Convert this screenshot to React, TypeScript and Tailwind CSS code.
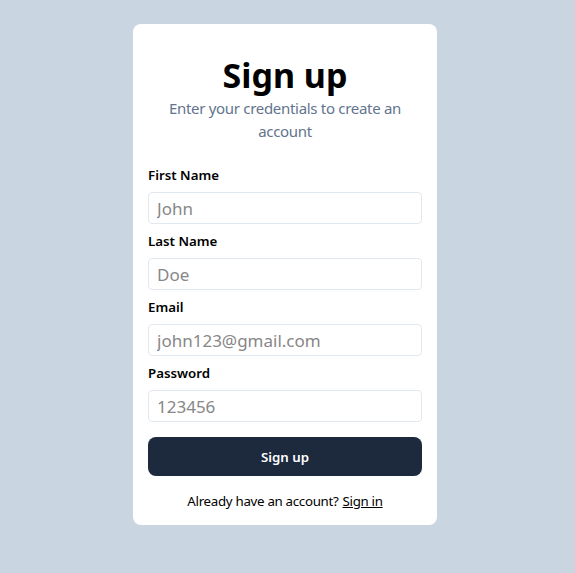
import React from 'react';

const font = { fontFamily: '"Noto Sans", "Open Sans", sans-serif' };

function Heading({ label }: { label: string }) {
  return <div className="pt-[25px] text-[34px] font-bold leading-[36px] text-black">{label}</div>;
}

function SubHeading({ label }: { label: string }) {
  return (
    <div className="px-[15px] pt-[4px] pb-[15px] text-[15px] leading-[23px] tracking-[-0.3px] text-slate-500">
      {label}
    </div>
  );
}

function InputBox({ label, placeholder }: { label: string; placeholder: string }) {
  return (
    <div>
      <div className="py-[7.5px] text-left text-[13.3px] font-semibold leading-[19px] text-black">{label}</div>
      <input
        placeholder={placeholder}
        className="h-[32px] w-full rounded border border-slate-200 px-[8px] text-[17px] text-black outline-none placeholder:text-[#878787]"
      />
    </div>
  );
}

function Button({ label }: { label: string }) {
  return (
    <button className="mb-[8px] h-[39px] w-full rounded-lg bg-slate-800 pt-[2px] text-[13.3px] font-semibold text-white">
      {label}
    </button>
  );
}

function BottomWarning({ label, linkText }: { label: string; linkText: string }) {
  return (
    <div className="flex justify-center pt-[8px] pb-[6px] text-[13.3px] leading-[19px] tracking-[-0.3px] text-black">
      <div>{label}</div>
      <a href="#" className="pl-1 underline">
        {linkText}
      </a>
    </div>
  );
}

export default function App() {
  return (
    <div className="flex h-screen justify-center bg-slate-300 pt-[24px] pr-[5px]" style={font}>
      <div className="h-max w-[304px] rounded-lg bg-white px-[15px] py-[8px] text-center">
        <Heading label="Sign up" />
        <SubHeading label="Enter your credentials to create an account" />
        <InputBox label="First Name" placeholder="John" />
        <InputBox label="Last Name" placeholder="Doe" />
        <InputBox label="Email" placeholder="john123@gmail.com" />
        <InputBox label="Password" placeholder="123456" />
        <div className="pt-[15px]">
          <Button label="Sign up" />
        </div>
        <BottomWarning label="Already have an account?" linkText="Sign in" />
      </div>
    </div>
  );
}
